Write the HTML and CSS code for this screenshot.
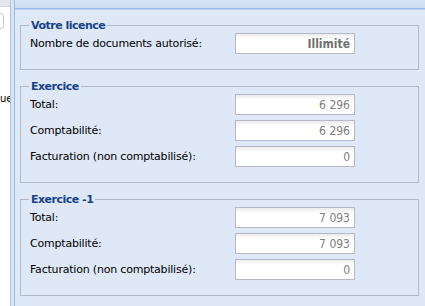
FILE: index.html
```html
<!DOCTYPE html>
<html lang="fr">
<head>
    <meta charset="UTF-8">
    <title>Statistiques</title>
    <link rel="stylesheet" href="styles.css">
</head>
<body>
    <div id="west">
        <div class="west-head"></div>
        <div class="west-field"></div>
        <div class="west-text">ue</div>
    </div>
    <div id="splitter"></div>
    <div id="panel">
        <div class="panel-head"></div>
        <div class="panel-body">
            <fieldset>
                <legend>Votre licence</legend>
                <div class="row">
                    <label>Nombre de documents autorisé:</label>
                    <input type="text" class="field bold" value="Illimité" readonly>
                </div>
            </fieldset>

            <fieldset>
                <legend>Exercice</legend>
                <div class="row">
                    <label>Total:</label>
                    <input type="text" class="field" value="6 296" readonly>
                </div>
                <div class="row">
                    <label>Comptabilité:</label>
                    <input type="text" class="field" value="6 296" readonly>
                </div>
                <div class="row">
                    <label>Facturation (non comptabilisé):</label>
                    <input type="text" class="field" value="0" readonly>
                </div>
            </fieldset>

            <fieldset>
                <legend>Exercice -1</legend>
                <div class="row">
                    <label>Total:</label>
                    <input type="text" class="field" value="7 093" readonly>
                </div>
                <div class="row">
                    <label>Comptabilité:</label>
                    <input type="text" class="field" value="7 093" readonly>
                </div>
                <div class="row">
                    <label>Facturation (non comptabilisé):</label>
                    <input type="text" class="field" value="0" readonly>
                </div>
            </fieldset>
        </div>
    </div>
</body>
</html>
```

FILE: styles.css
```css
html, body {
    margin: 0;
    padding: 0;
    height: 100%;
    overflow: hidden;
}
body {
    font-family: "DejaVu Sans", sans-serif;
    font-size: 11px;
    color: #000;
    display: flex;
    background: #dfe8f6;
}
#west {
    width: 10px;
    flex-shrink: 0;
    background: #fff;
    border-right: 1px solid #a9c3e3;
    overflow: hidden;
}
.west-head {
    height: 6px;
    background: #e3e7ed;
    border-bottom: 1px solid #d3d8e0;
}
.west-field {
    margin: 6px 0 0 -10px;
    width: 12px;
    height: 14px;
    border: 1px solid #c5cbd3;
    border-radius: 3px;
}
.west-text {
    margin-top: 64px;
    font-size: 10px;
    text-align: right;
    white-space: nowrap;
}
#splitter {
    width: 3px;
    flex-shrink: 0;
    background: #d6e4f4;
}
#panel {
    flex-grow: 1;
    border-left: 1px solid #99bbe8;
    display: flex;
    flex-direction: column;
}
.panel-head {
    height: 10px;
    background: linear-gradient(#d6e4f5, #cddef1);
    border-bottom: 1px solid #99bbe8;
    box-shadow: 0 1px 0 #bcd2ee;
}
.panel-body {
    padding: 10px 5px 0 5px;
    width: 399px;
}
fieldset {
    margin: 0 0 10px 0;
    padding: 1px 10px 15px 9px;
    border: 1px solid #b5b8c8;
    display: flex;
    flex-direction: column;
    gap: 5px;
}
legend {
    color: #15428b;
    font-weight: bold;
    line-height: 13px;
    letter-spacing: -0.5px;
    padding: 0 2px;
    margin-left: -1px;
}
.row {
    display: flex;
    align-items: center;
    height: 21px;
}
.row label {
    width: 205px;
    flex-shrink: 0;
    letter-spacing: -0.2px;
}
.field {
    box-sizing: border-box;
    width: 120px;
    height: 21px;
    margin: 0;
    padding: 0 4px 0 3px;
    border: 1px solid #b5b8c8;
    background: linear-gradient(#ececec, #fff 5px);
    font-family: "DejaVu Sans Condensed", "DejaVu Sans", sans-serif;
    font-size: 12px;
    color: #808080;
    text-align: right;
    outline: none;
}
.field.bold {
    font-weight: bold;
    color: #707070;
}
```
